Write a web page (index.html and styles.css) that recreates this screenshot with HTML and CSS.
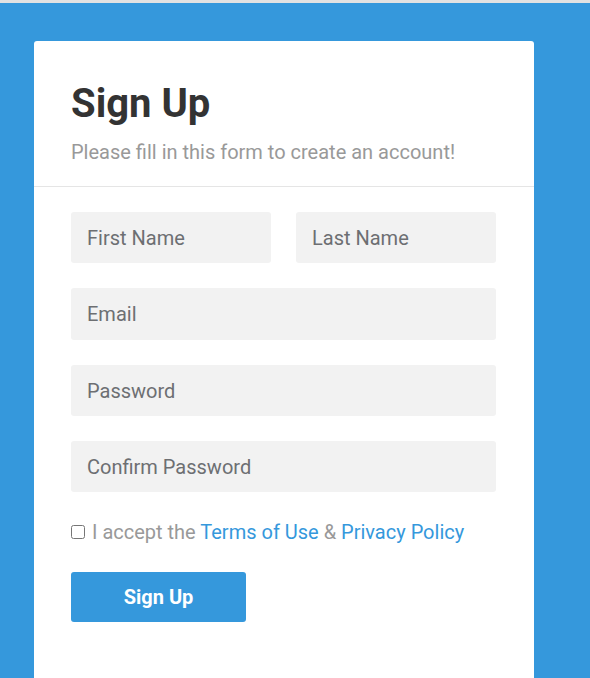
FILE: index.html
```html
<!DOCTYPE html>
<html lang="en">
<head>
<meta charset="utf-8">
<title>Sign Up</title>
<link rel="stylesheet" href="styles.css">
</head>
<body>
<div class="page">
  <form class="card">
    <div class="card-header">
      <h2 class="title">Sign Up</h2>
      <p class="subtitle">Please fill in this form to create an account!</p>
    </div>
    <div class="card-body">
      <div class="row">
        <input class="field" type="text" placeholder="First Name">
        <input class="field" type="text" placeholder="Last Name">
      </div>
      <input class="field field-tall" type="email" placeholder="Email">
      <input class="field" type="password" placeholder="Password">
      <input class="field" type="password" placeholder="Confirm Password">
      <label class="accept">
        <input class="check" type="checkbox">
        <span>I accept the <a href="#" class="link">Terms of Use</a> &amp; <a href="#" class="link">Privacy Policy</a></span>
      </label>
      <button class="btn" type="button">Sign Up</button>
    </div>
  </form>
</div>
</body>
</html>
```

FILE: styles.css
```css
html, body {
  margin: 0;
  padding: 0;
  height: 100%;
}
body {
  background: #3598dc;
  border-top: 3px solid #e2e2e2;
  box-sizing: border-box;
  font-family: Roboto, "Noto Sans", sans-serif;
  overflow: hidden;
}
.page {
  padding: 38px 0 0 34px;
}
.card {
  width: 500px;
  min-height: 700px;
  background: #fff;
  border-radius: 3px 3px 0 0;
}
.card-header {
  padding: 36px 37px 21px;
  border-bottom: 1px solid #e5e5e5;
}
.title {
  margin: 0;
  font-size: 40px;
  line-height: 54px;
  font-weight: 700;
  color: #333;
}
.subtitle {
  margin: 8px 0 0;
  font-size: 20px;
  line-height: 26px;
  color: #999;
}
.card-body {
  padding: 25px 38px 0 37px;
  display: flex;
  flex-direction: column;
  gap: 25px;
}
.row {
  display: flex;
  gap: 25px;
}
.field {
  display: block;
  box-sizing: border-box;
  width: 100%;
  height: 51px;
  margin: 0;
  padding: 0 16px;
  border: none;
  border-radius: 3px;
  background: #f2f2f2;
  font-family: Roboto, sans-serif;
  font-size: 20px;
  color: #555;
  outline: none;
}
.field-tall {
  height: 52px;
}
.row .field {
  flex: 1;
  min-width: 0;
}
.field::placeholder {
  color: #6d6f72;
  opacity: 1;
}
.accept {
  display: flex;
  align-items: center;
  gap: 7px;
  font-size: 20px;
  line-height: 26px;
  color: #999;
  margin-top: 2px;
}
.check {
  margin: 0;
  width: 14px;
  height: 14px;
}
.link {
  color: #3598dc;
  text-decoration: none;
}
.btn {
  align-self: flex-start;
  width: 175px;
  height: 50px;
  margin-top: 2px;
  border: none;
  border-radius: 3px;
  background: #3598dc;
  color: #fff;
  font-family: Roboto, sans-serif;
  font-size: 20px;
  font-weight: 700;
  cursor: pointer;
}
```
